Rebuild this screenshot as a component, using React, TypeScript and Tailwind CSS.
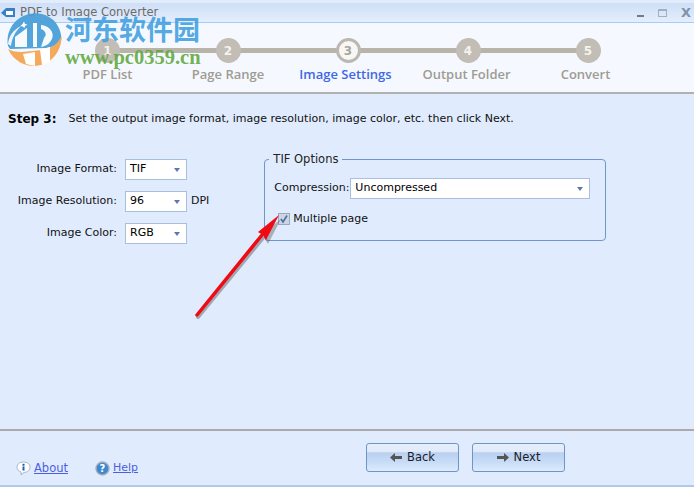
const STEPS = [
  { n: 1, label: 'PDF List', width: 'w-[121px]', labelClass: 'text-[#a09b92]' },
  { n: 2, label: 'Page Range', width: 'w-[120px]', labelClass: 'text-[#a09b92]' },
  { n: 3, label: 'Image Settings', width: 'w-[120px]', active: true, labelClass: 'mr-[5px] text-[#3f67e8]' },
  { n: 4, label: 'Output Folder', width: 'w-[120px]', labelClass: 'mr-[3px] text-[#a09b92]' },
  { n: 5, label: 'Convert', width: 'w-[120px]', labelClass: 'mr-[5px] text-[#a09b92]' },
]

function Combo({ value, className }: { value: string; className: string }) {
  return (
    <div className={`flex h-[21px] items-center justify-between border border-[#a9bfdf] bg-white pl-[4px] pr-[5px] text-[11px] text-black ${className}`}>
      <span>{value}</span>
      <span className="mr-[1px] h-0 w-0 border-x-[3px] border-t-[4px] border-x-transparent border-t-[#5b7bb0]" />
    </div>
  )
}

function FieldRow({ label, value, suffix }: { label: string; value: string; suffix?: string }) {
  return (
    <div className="flex items-center">
      <span className="w-[109px] text-right text-[11px] text-[#111]">{label}</span>
      <Combo value={value} className="ml-[8px] w-[62px]" />
      {suffix && <span className="ml-[4px] text-[11px] text-[#111]">{suffix}</span>}
    </div>
  )
}

function WizardButton({ label, dir }: { label: string; dir: 'left' | 'right' }) {
  return (
    <button className="relative flex h-[29px] w-[93px] items-center justify-center gap-[5px] rounded-[3px] border border-[#6f95c8] bg-[linear-gradient(#e6effb_0%,#e0eafa_30%,#b9d0ef_32%,#c4d9f4_60%,#dcebfd_100%)] text-[11.5px] text-[#1a1a2a]">
      <svg width="12" height="9" viewBox="0 0 12 9" className={dir === 'left' ? '' : 'rotate-180'}>
        <path d="M0 4.5 L5 0 V3 H12 V6 H5 V9 Z" fill="#555" />
      </svg>
      {label}
    </button>
  )
}

// round site mark plus name and address, laid over the title bar and wizard strip
function SiteBadge() {
  return (
    <div className="absolute left-0 top-0 h-[70px] w-[210px]">
      <svg width="70" height="70" viewBox="0 0 70 70" className="absolute left-0 top-0">
        <path d="M8 46 A27.5 27.5 0 0 1 56 23 C60 29 62 35 61 41 C56 46 50 48 44 48 L10 49 Z" fill="#4a9fd8" fillOpacity="0.95" />
        <path d="M8 49 C14 62 26 66 34 66 C50 66 62 52 61.5 36 C58 44 52 48 42 50 L22 52 C16 52 11 51 8 49 Z" fill="#f5a95a" />
        <path d="M8 44 C9 36 13 30 21 26 C15 32 12 38 11 46 Z" fill="#fff" fillOpacity="0.9" />
        <path d="M22.5 24 L24 21.5 L25 24 L27.5 24.5 L25 26 L24.5 28 L22.5 26.5 L20.5 26 Z" fill="#fff" />
        <path d="M15 37 L27 28 V47 H15 Z" fill="#fff" fillOpacity="0.95" />
        <path d="M33 23 H37 V47 H33 Z" fill="#fff" fillOpacity="0.95" />
        <path d="M41 25 C52 26 56 36 50 42 C48 45 45 46 41 47 L44 38 C47 35 46 31 41 29 Z" fill="#fff" fillOpacity="0.95" />
        <path d="M23 54 L35 52 V66 L26 64 Z" fill="#fff" />
        <path d="M40 50 L50 47 V62 L42 65 Z" fill="#fff" />
      </svg>
      <span className="absolute left-[65px] top-[12px] text-[27px] font-bold leading-[34px] text-[#3f9fe0]/90 [font-family:'Noto_Sans_CJK_SC',sans-serif]">
        河东软件园
      </span>
      <span className="absolute left-[65px] top-[45px] text-[20.5px] font-bold leading-[24px] text-[#5fa83c]/90 [font-family:'Liberation_Serif',serif]">
        www.pc0359.cn
      </span>
    </div>
  )
}

export default function App() {
  return (
    <div className="relative flex h-[487px] w-[694px] flex-col overflow-hidden bg-[#e0ecfe] text-[11px] [font-family:'DejaVu_Sans',sans-serif]">
      {/* Title bar */}
      <div className="flex h-[23px] shrink-0 items-center justify-between border-b border-[#a8cdf5] bg-[linear-gradient(#e2edfb_0%,#e2edfb_12%,#cfdff7_14%,#e4eefc_100%)] pl-[1px] pr-[3px] pt-[3px]">
        <div className="flex items-center gap-[5px] text-[11.5px] text-[#6b6b6b]">
          <svg width="14" height="12" viewBox="0 0 14 12">
            <path d="M0 6 L5 1 H14 V10 H5 Z" fill="#3a7fc4" />
            <rect x="5" y="4" width="7" height="4" fill="#fff" />
          </svg>
          PDF to Image Converter
        </div>
        <div className="flex items-center gap-[14px]">
          <span className="mt-[7px] h-[2px] w-[7px] bg-[#6e7b8c]" />
          <span className="h-[8px] w-[9px] border border-[#9fb0c4] border-t-2" />
          <span className="text-[13px] font-bold leading-none text-[#7e93ab]">X</span>
        </div>
      </div>

      {/* Wizard steps */}
      <div className="flex h-[71px] shrink-0 border-b-2 border-[#b1b1b1] bg-[#f5f9ff] pl-[47px] pt-[15px]">
        {STEPS.map((s, i) => (
          <div key={s.n} className={`relative flex shrink-0 flex-col items-center ${s.width}`}>
            {i < STEPS.length - 1 && (
              <span className="absolute left-1/2 top-[10px] h-[5px] w-full bg-[#b9b4aa]" />
            )}
            {s.active ? (
              <span className="relative flex h-[25px] w-[25px] items-center justify-center rounded-full border-[3px] border-[#bdb8af] bg-[#f7f7f5] text-[12px] font-bold text-[#a9a59c]">
                {s.n}
              </span>
            ) : (
              <span className="relative flex h-[25px] w-[25px] items-center justify-center rounded-full bg-[#c2bdb5] text-[12px] font-bold text-[#f4f2ee]">
                {s.n}
              </span>
            )}
            <span className={`mt-[2px] whitespace-nowrap text-[13px] font-semibold [font-family:'Open_Sans',sans-serif] ${s.labelClass}`}>
              {s.label}
            </span>
          </div>
        ))}
      </div>

      {/* Step body */}
      <div className="flex flex-1 flex-col pl-[8px] pt-[16px]">
        <div className="flex items-center">
          <span className="text-[12px] font-bold text-black">Step 3:</span>
          <span className="ml-[12px] text-[11px] text-[#111]">
            Set the output image format, image resolution, image color, etc. then click Next.
          </span>
        </div>

        <div className="mt-[21px] flex items-start">
          <div className="flex flex-col gap-[11px] pt-[10px]">
            <FieldRow label="Image Format:" value="TIF" />
            <FieldRow label="Image Resolution:" value="96" suffix="DPI" />
            <FieldRow label="Image Color:" value="RGB" />
          </div>

          <fieldset className="ml-[55px] mt-[3px] h-[89px] w-[342px] rounded-[4px] border border-[#6f95cf] px-[9px]">
            <legend className="ml-[-5px] px-[4px] text-[11.5px] leading-[14px] text-[#222]">TIF Options</legend>
            <div className="mt-[12px] flex items-center">
              <span className="w-[72px] whitespace-nowrap text-[11px] text-[#111]">Compression:</span>
              <Combo value="Uncompressed" className="ml-[4px] w-[240px]" />
            </div>
            <label className="mt-[12px] flex items-center gap-[3px] text-[11px] text-[#111]">
              <span className="ml-[4px] flex h-[12px] w-[12px] items-center justify-center border border-[#9aa9bd] bg-[#cdd5e2]">
                <svg width="10" height="10" viewBox="0 0 10 10">
                  <path d="M2 5 L4 8 L8 1.5" fill="none" stroke="#4a6fa8" strokeWidth="1.6" />
                </svg>
              </span>
              Multiple page
            </label>
          </fieldset>
        </div>
      </div>

      {/* Footer */}
      <div className="flex h-[56px] shrink-0 items-start border-t-2 border-[#ababab] bg-[#e0ecfe]">
        <div className="flex w-[366px] shrink-0 items-center pl-[16px] pt-[29px]">
          <svg width="15" height="15" viewBox="0 0 15 15">
            <path d="M7.5 1 C11.5 1 14 3.2 14 6.2 C14 9.2 11.5 11.4 8 11.4 L5 14 L5.2 11 C2.6 10.2 1 8.4 1 6.2 C1 3.2 3.5 1 7.5 1 Z" fill="#fff" stroke="#a9b4c4" />
            <rect x="6.5" y="2.8" width="2" height="2" fill="#1f5fb0" />
            <rect x="6.5" y="5.5" width="2" height="4" fill="#1f5fb0" />
          </svg>
          <a className="ml-[3px] text-[11.5px] text-[#4c5fe0] underline">About</a>
          <svg width="15" height="15" viewBox="0 0 15 15" className="ml-[27px]">
            <circle cx="7.5" cy="7.5" r="6.5" fill="#3f87cf" stroke="#a7aeb6" strokeWidth="1.4" />
            <text x="7.5" y="11" textAnchor="middle" fontSize="10" fontWeight="700" fill="#fff">?</text>
          </svg>
          <a className="ml-[3px] text-[11px] text-[#4c5fe0] underline">Help</a>
        </div>
        <div className="flex gap-[13px] pt-[12px]">
          <WizardButton label="Back" dir="left" />
          <WizardButton label="Next" dir="right" />
        </div>
      </div>
      <div className="h-[2px] shrink-0 bg-[#b0caed]" />

      <SiteBadge />

      {/* Callout arrow pointing at the checkbox */}
      <svg width="100" height="110" viewBox="0 0 100 110" className="pointer-events-none absolute left-[190px] top-[212px]">
        <path d="M8 105 L72 27" stroke="#555" strokeOpacity="0.45" strokeWidth="4" strokeLinecap="round" />
        <path d="M90 5 L69 22 L74 25 L77 30 Z" fill="#555" fillOpacity="0.4" transform="translate(1 2)" />
        <path d="M7 103 L72 23" stroke="#f00a14" strokeWidth="3.5" strokeLinecap="round" />
        <path d="M89 3 L68 20 L73 23 L76 28 Z" fill="#f00a14" />
      </svg>
    </div>
  )
}
